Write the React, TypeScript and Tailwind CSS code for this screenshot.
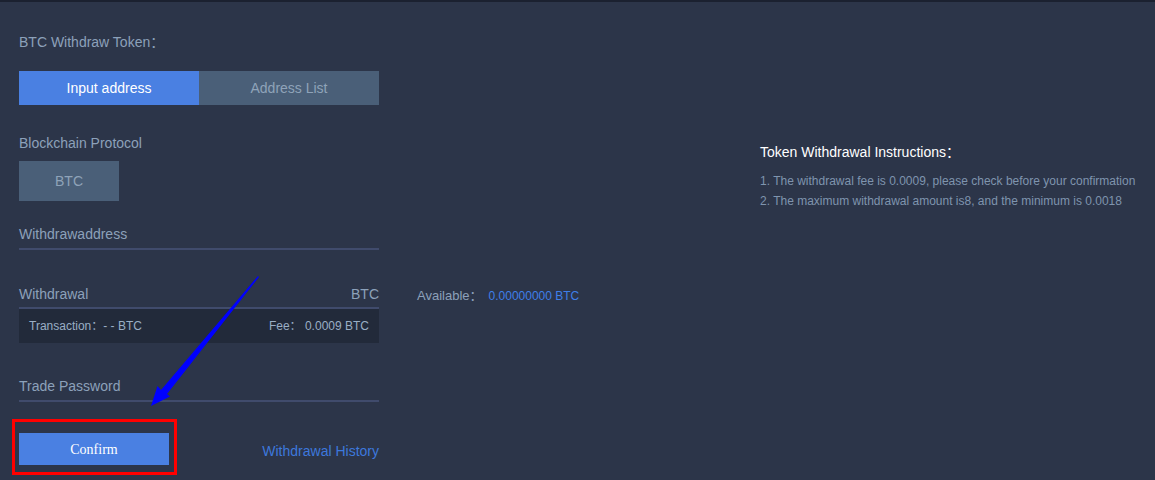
import React from "react";

const font = { fontFamily: '"Liberation Sans", Arial, "Noto Sans CJK SC", sans-serif' };

export default function App() {
  return (
    <div className="relative min-h-screen bg-[#2c3549] border-t-2 border-[#1b2130] text-[#8ca1ba]" style={font}>
      <div className="flex">
        {/* Form */}
        <div className="w-[760px] pl-[19px]">
          <p className="mt-[30px] text-[14px] leading-5">BTC Withdraw Token：</p>

          <div className="mt-[19px] flex h-[34px] w-[360px] text-[14px]">
            <button className="flex-1 bg-[#4a80e2] text-white">Input address</button>
            <button className="flex-1 bg-[#4a5f78] text-[#8fa3b9]">Address List</button>
          </div>

          <p className="mt-[28px] text-[14px] leading-5">Blockchain Protocol</p>
          <button className="mt-[8px] h-[40px] w-[100px] bg-[#4a5f78] text-[14px] text-[#8fa3b9]">BTC</button>

          <div className="mt-[23px] w-[360px] border-b-2 border-[#404b6c] pb-1 text-[14px] leading-5">
            Withdrawaddress
          </div>

          <div className="mt-[34px] flex items-start">
            <div className="w-[360px]">
              <div className="flex justify-between border-b-2 border-[#404b6c] pb-[3px] text-[14px] leading-5">
                <span>Withdrawal</span>
                <span>BTC</span>
              </div>
              <div className="flex h-[34px] items-center justify-between bg-[#222a3a] px-[10px] text-[12px] text-[#9aaec5]">
                <span>Transaction：- - BTC</span>
                <span>Fee：&nbsp;0.0009 BTC</span>
              </div>
            </div>
            <div className="ml-[38px] mt-[2px] flex items-center leading-5">
              <span className="text-[13px]">Available：</span>
              <span className="ml-[6px] text-[12px] text-[#3f7fe8]">0.00000000 BTC</span>
            </div>
          </div>

          <div className="mt-[33px] w-[360px] border-b-2 border-[#404b6c] pb-1 text-[14px] leading-5">
            Trade Password
          </div>

          <div className="mt-[31px] flex w-[360px] items-start justify-between">
            <div className="relative">
              <button
                className="h-[32px] w-[150px] bg-[#4a80e2] text-[14px] text-white"
                style={{ fontFamily: '"Liberation Serif", "Times New Roman", serif' }}
              >
                Confirm
              </button>
              <div className="pointer-events-none absolute left-[-7px] top-[-14px] h-[56px] w-[165px] border-[3px] border-[#ff0000]" />
            </div>
            <a className="mt-[8px] text-[14px] leading-5 text-[#3d78dc]">Withdrawal History</a>
          </div>
        </div>

        {/* Instructions */}
        <div className="mt-[140px]">
          <h3 className="text-[14px] leading-5 text-white">Token Withdrawal Instructions：</h3>
          <ul className="mt-[9px] text-[12px] leading-5 text-[#7f94ae]">
            <li>1. The withdrawal fee is 0.0009, please check before your confirmation</li>
            <li>2. The maximum withdrawal amount is8, and the minimum is 0.0018</li>
          </ul>
        </div>
      </div>

      {/* annotation arrow */}
      <svg className="pointer-events-none absolute left-0 top-[-2px]" width="1155" height="480">
        <polygon
          points="259,277 167,394 170,396.5 151,406 157.5,386 161,390 258,276"
          fill="#0000ff"
        />
      </svg>
    </div>
  );
}
